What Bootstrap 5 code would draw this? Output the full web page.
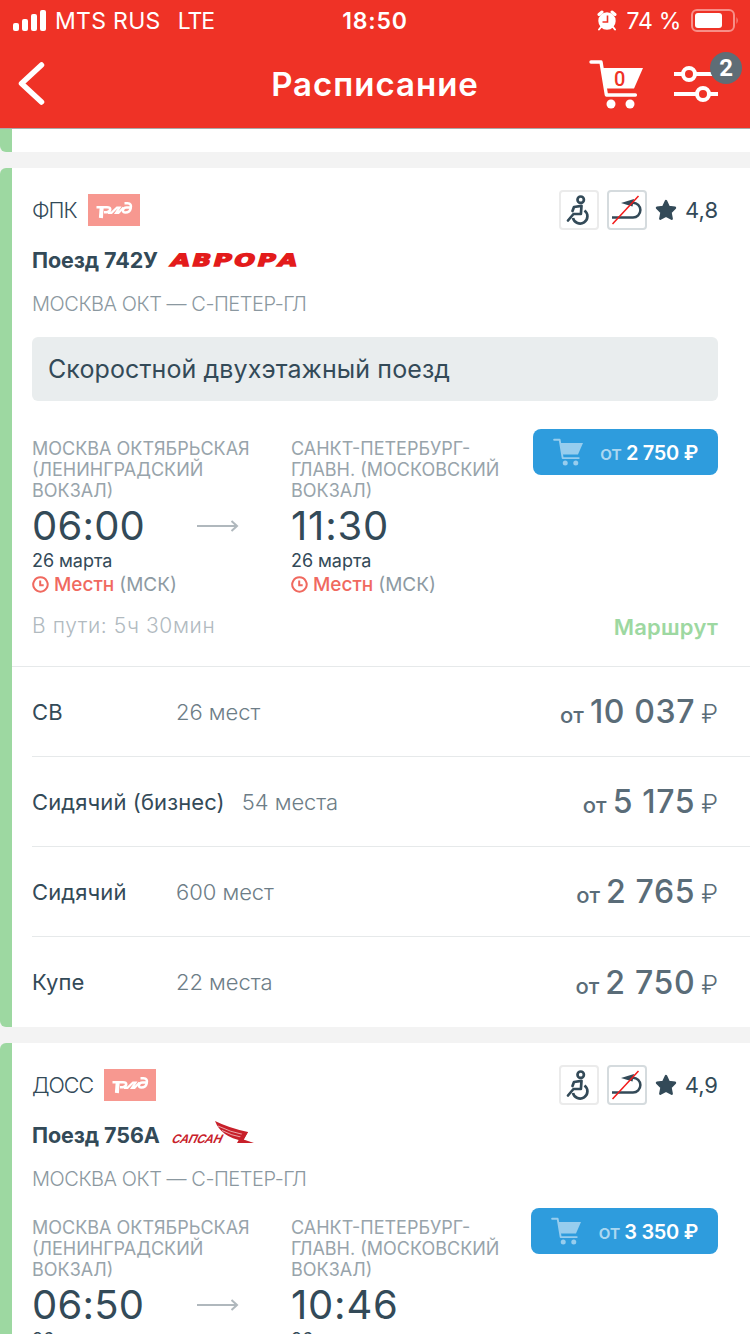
<!DOCTYPE html>
<html lang="ru">

<head>
    <meta charset="UTF-8">
    <meta name="viewport" content="width=device-width, initial-scale=1">
    <title>Расписание</title>

    <!-- Bootstrap CSS -->
    <link href="https://cdn.jsdelivr.net/npm/bootstrap@5.3.0/dist/css/bootstrap.min.css" rel="stylesheet">

    <!-- Custom CSS -->
    <style>
        body {
            width: 750px;
            height: 1334px;
            font-family: Inter, "Noto Sans", sans-serif;
            font-size: 22px;
            line-height: 24px;
            color: #334a58;
            background: #f3f3f3;
            white-space: nowrap;
        }
        svg { display: block; flex: none; }

        /* шапка */
        .top-bar { height: 129px; background: #ef3226; border-bottom: 1px solid #a9aaa9; }
        .status { height: 40px; font-size: 23px; padding: 1px 11px 0 13px; }
        .status .side { flex: 1 1 0; letter-spacing: .3px; }
        .status .clock { font-weight: 600; letter-spacing: .8px; margin: 0 1px 0 -1px; }
        .status .lte { margin-left: 17px; letter-spacing: -1px; }
        .status .charge { margin: 0 9px 0 10px; letter-spacing: -.3px; }
        .title-bar { height: 88px; padding: 0 32px; }
        .title-bar .side { flex: 1 1 0; }
        .title-bar h1 { font-size: 33px; line-height: 40px; font-weight: 600; letter-spacing: 1px; }
        .back { margin-left: -14px; }
        .gap-tools { gap: 31px; }
        .counter { top: -14px; left: 36px; width: 32px; height: 32px; line-height: 32px; background: #5f6d76; font-family: Roboto, sans-serif; font-size: 24px; font-weight: 700; }

        /* карточка поезда */
        .train { margin-bottom: 16px; }
        .stripe { width: 12px; flex: none; background: #9dd8a1; border-radius: 6px 0 0 6px; }
        .stripe-end { border-radius: 0 0 0 6px; height: 23px; }
        .train-info { padding: 22px 32px 0 20px; }
        .carrier { font-size: 21.5px; font-weight: 300; letter-spacing: -1px; margin-right: 3px; }
        .svc { width: 40px; height: 40px; border: 2px solid #ebebeb; border-radius: 4px; }
        .svc-on { border-color: #d5dbde; }
        .rating { gap: 8px; }
        .train-name { height: 30px; margin-top: 15px; font-weight: 700; font-size: 21.5px; letter-spacing: -.1px; }
        .direction { margin-top: 17px; font-size: 20px; font-weight: 300; color: #8b98a0; letter-spacing: -.45px; }
        .note { height: 64px; margin-top: 21px; padding-left: 16px; border-radius: 6px; background: #e9edee; font-size: 25px; letter-spacing: .1px; }
        .trip { margin-top: 28px; }
        .trip-plain { margin-top: 17px; }
        .station { width: 259px; flex: none; padding-top: 9px; }
        .station-to { width: 240px; }
        .place { font-size: 18px; line-height: 21px; color: #98a4ab; letter-spacing: 0; }
        .time { width: 165px; font-size: 40px; line-height: 50px; letter-spacing: .2px; }
        .station-to .time { letter-spacing: .8px; }
        .day { font-size: 18px; line-height: 19px; letter-spacing: -.05px; }
        .zone { font-size: 19px; line-height: 28px; font-weight: 400; gap: 5px; color: #8d9aa2; padding-top: 1px; }
        .zone svg { margin-top: -2px; }
        .zone b { font-weight: 500; color: #f0695f; }
        .buy { height: 46px; padding: 2px 20px 0; border: 0; border-radius: 8px; background: #2e9cdd; color: #fff; font-size: 20px; line-height: 44px; font-weight: 600; letter-spacing: -.3px; gap: 17px; }
        .buy svg { margin-top: -2px; }
        .buy span { color: #abd7f1; font-weight: 500; }
        .buy-wrap { flex: 1 1 0; }
        .duration { margin-top: 15px; height: 52px; font-size: 21px; color: #b1babf; font-weight: 300; letter-spacing: .6px; }
        .route { font-size: 22px; font-weight: 600; color: #9dd8a1; letter-spacing: .2px; padding-top: 1px; }

        /* классы вагонов */
        .seats { border-top: 1px solid #e6e9ea; padding-left: 20px; }
        .seat { height: 90px; padding-right: 32px; border-bottom: 1px solid #e6e9ea; letter-spacing: .1px; }
        .seat:last-child { border-bottom: 0; }
        .kind { min-width: 144px; padding-right: 17px; }
        .free { color: #6d7d87; font-weight: 300; letter-spacing: -.05px; }
        .price { color: #5a6c78; font-weight: 500; font-size: 32px; line-height: 40px; letter-spacing: .65px; padding-top: 4px; gap: 6px; }
        .price small { font-size: 22px; letter-spacing: 0; }
        .price i { font-style: normal; font-size: 25px; font-weight: 300; letter-spacing: 0; }
    </style>
</head>

<body class="overflow-hidden">

<!-- Иконки -->
<svg class="d-none">
    <symbol id="cart" viewBox="0 0 54 50">
        <path d="M2 3h10l5.400 33h29" fill="none" stroke="currentColor" stroke-width="3.400" stroke-linecap="round" stroke-linejoin="round"/>
        <path d="M13 9h41l-9 20.500H17z" fill="currentColor"/>
        <circle cx="22" cy="45" r="4.500" fill="currentColor"/>
        <circle cx="41" cy="45" r="4.500" fill="currentColor"/>
    </symbol>
    <symbol id="rzd" viewBox="0 0 52 32">
        <path fill="#f79890" d="M0 0h52v32H0z"/>
        <g fill="none" stroke="#fff">
            <path d="M8.500 13.200h10.500q3.500 0 3.200 2.300t-3.500 2.700h-2.700" stroke-width="2.600"/>
            <path d="M13.700 13L12.900 24" stroke-width="4"/>
            <path d="M20 18.800h3.500l5.500-5.300h2.500L28 18.800h2.500l5-5.300" stroke-width="2.200"/>
            <path d="M36.500 9.300h3q4.500 0 3.200 5.200-.9 4-5.200 4-3 0-2.500-2.500t3.500-2.500h4" stroke-width="2.500"/>
        </g>
    </symbol>
    <symbol id="chair" viewBox="0 0 36 36">
        <g fill="none" stroke="#334a58" stroke-width="2.700" stroke-linejoin="round">
            <circle cx="19.700" cy="7.700" r="3.200"/>
            <path d="M11.500 19l1.500-4 7.500-1.200-.6 8.200h-7.400L7 28.500" stroke-linecap="round"/>
            <path d="M23.500 18.500a7.300 7.300 0 1 1-11.500 7.500"/>
        </g>
    </symbol>
    <symbol id="noreturn" viewBox="0 0 36 36">
        <path d="M3 25.500h21a7.300 7.300 0 0 0 0-14.800H20" fill="none" stroke="#334a58" stroke-width="2.500"/>
        <path d="M12 11L25 7l-1.500 7.500z" fill="#334a58"/>
        <path d="M3.500 32L29.500 4" stroke="#f21a1a" stroke-width="1.500"/>
    </symbol>
    <symbol id="star" viewBox="0 0 22 22">
        <path d="M11 2l2.800 6 6.200.8-4.500 4.600 1.200 6.400L11 16.800l-5.700 3 1.200-6.400L2 8.800 8.200 8z" fill="#334a58" stroke="#334a58" stroke-width="2.400" stroke-linejoin="round"/>
    </symbol>
    <symbol id="arrow" viewBox="0 0 42 14">
        <path d="M0 7h40M34.500 2l5.500 5-5.500 5" fill="none" stroke="#b0b8bd" stroke-width="2"/>
    </symbol>
    <symbol id="watch" viewBox="0 0 17 17">
        <path d="M8.500 1.300a7.200 7.200 0 1 1-.1 0zM8.200 4.500v4.700h3.500" fill="none" stroke="#f0695f" stroke-width="2"/>
    </symbol>
</svg>

<header class="top-bar text-white">
    <div class="status d-flex align-items-center">
        <div class="side d-flex align-items-center">
            <svg width="34" height="22" viewBox="0 0 34 22" fill="#fff">
                <rect y="13" width="6" height="8" rx="2"/>
                <rect x="9" y="9" width="6" height="12" rx="2"/>
                <rect x="18" y="4" width="6" height="17" rx="2"/>
                <rect x="27" width="6" height="21" rx="2"/>
            </svg>
            <span class="ms-2">MTS RUS</span><span class="lte">LTE</span>
        </div>
        <div class="clock">18:50</div>
        <div class="side d-flex align-items-center justify-content-end">
            <svg width="20" height="21" viewBox="0 0 20 21">
                <circle cx="10" cy="11" r="8.700" fill="#fff"/>
                <path d="M2 4.500L5 2M18 4.500L15 2" stroke="#fff" stroke-width="3" stroke-linecap="round"/>
                <path d="M4 17l-2 2.500M16 17l2 2.500" stroke="#fff" stroke-width="2" stroke-linecap="round"/>
                <path d="M10.500 5.500V12H5.500" fill="none" stroke="#ef3226" stroke-width="1.600"/>
            </svg>
            <span class="charge">74 %</span>
            <svg width="49" height="24" viewBox="0 0 49 24">
                <rect x="2" y="1" width="42" height="21" rx="5" fill="none" stroke="#f78f88" stroke-width="2"/>
                <rect x="5" y="4" width="27" height="15" rx="3" fill="#fff"/>
                <path d="M46.500 8q2.500 3.500 0 7z" fill="#f78f88"/>
            </svg>
        </div>
    </div>
    <div class="title-bar d-flex align-items-center">
        <div class="side">
            <svg class="back" width="27" height="44" viewBox="0 0 27 44">
                <path d="M23.500 3L3.500 21.500l20 18.500" fill="none" stroke="#fff" stroke-width="5.500" stroke-linecap="round" stroke-linejoin="round"/>
            </svg>
        </div>
        <h1 class="m-0">Расписание</h1>
        <div class="side d-flex align-items-center justify-content-end gap-tools">
            <svg width="54" height="50" viewBox="0 0 54 50" class="text-white">
                <use href="#cart"/>
                <text x="30.700" y="27" text-anchor="middle" font-family="Roboto" font-size="20" font-weight="500" fill="#ef3226">0</text>
            </svg>
            <div class="position-relative">
                <svg width="44" height="36" viewBox="0 0 44 36" fill="none" stroke="#fff" stroke-width="4">
                    <path d="M0 8h9M21 8h23M0 28h23M35 28h9"/>
                    <circle cx="15" cy="8" r="6"/>
                    <circle cx="29" cy="28" r="6"/>
                </svg>
                <span class="counter position-absolute rounded-circle text-center">2</span>
            </div>
        </div>
    </div>
</header>

<main>
    <!-- Конец предыдущей карточки -->
    <section class="train d-flex">
        <div class="stripe stripe-end"></div>
        <div class="bg-white flex-grow-1"></div>
    </section>

    <section class="train d-flex">
        <div class="stripe"></div>
        <div class="bg-white flex-grow-1">
            <div class="train-info">
                <div class="d-flex align-items-center gap-2">
                    <span class="carrier">ФПК</span>
                    <svg width="52" height="32"><use href="#rzd"/></svg>
                    <div class="svc ms-auto"><svg width="36" height="36"><use href="#chair"/></svg></div>
                    <div class="svc svc-on"><svg width="36" height="36"><use href="#noreturn"/></svg></div>
                    <div class="rating d-flex align-items-center">
                        <svg width="22" height="22"><use href="#star"/></svg>
                        <span>4,8</span>
                    </div>
                </div>
                <div class="train-name d-flex align-items-center">
                    <span>Поезд 742У</span>
                    <svg class="ms-2" width="138" height="20" viewBox="0 0 138 20">
                        <text x="8" y="16" transform="skewX(-16)" textLength="129" lengthAdjust="spacingAndGlyphs" letter-spacing="2" font-family="DejaVu Sans" font-size="17" font-weight="700" fill="#e31b1b" stroke="#e31b1b" stroke-width="1.400">АВРОРА</text>
                    </svg>
                </div>
                <div class="direction">МОСКВА ОКТ — С-ПЕТЕР-ГЛ</div>
                <div class="note d-flex align-items-center">Скоростной двухэтажный поезд</div>
                <div class="trip d-flex">
                    <div class="station">
                        <div class="place">МОСКВА ОКТЯБРЬСКАЯ<br>(ЛЕНИНГРАДСКИЙ<br>ВОКЗАЛ)</div>
                        <div class="d-flex align-items-center">
                            <span class="time">06:00</span>
                            <svg width="42" height="14"><use href="#arrow"/></svg>
                        </div>
                        <div class="day">26 марта</div>
                        <div class="zone d-flex align-items-center">
                            <svg width="17" height="17"><use href="#watch"/></svg>
                            <b>Местн</b> <span>(МСК)</span>
                        </div>
                    </div>
                    <div class="station station-to">
                        <div class="place">САНКТ-ПЕТЕРБУРГ-<br>ГЛАВН. (МОСКОВСКИЙ<br>ВОКЗАЛ)</div>
                        <div class="time">11:30</div>
                        <div class="day">26 марта</div>
                        <div class="zone d-flex align-items-center">
                            <svg width="17" height="17"><use href="#watch"/></svg>
                            <b>Местн</b> <span>(МСК)</span>
                        </div>
                    </div>
                    <div class="buy-wrap d-flex justify-content-end align-items-start">
                        <button type="button" class="buy btn d-flex align-items-center">
                            <svg width="30" height="28" color="#97cdee"><use href="#cart"/></svg>
                            <div><span>от</span> 2 750 ₽</div>
                        </button>
                    </div>
                </div>
                <div class="duration d-flex justify-content-between">
                    <span>В пути: 5ч 30мин</span>
                    <span class="route">Маршрут</span>
                </div>
            </div>
            <div class="seats">
                <div class="seat d-flex align-items-center">
                    <span class="kind">СВ</span>
                    <span class="free">26 мест</span>
                    <div class="price d-flex align-items-baseline ms-auto"><small>от</small><span>10 037</span><i>₽</i></div>
                </div>
                <div class="seat d-flex align-items-center">
                    <span class="kind">Сидячий (бизнес)</span>
                    <span class="free">54 места</span>
                    <div class="price d-flex align-items-baseline ms-auto"><small>от</small><span>5 175</span><i>₽</i></div>
                </div>
                <div class="seat d-flex align-items-center">
                    <span class="kind">Сидячий</span>
                    <span class="free">600 мест</span>
                    <div class="price d-flex align-items-baseline ms-auto"><small>от</small><span>2 765</span><i>₽</i></div>
                </div>
                <div class="seat d-flex align-items-center">
                    <span class="kind">Купе</span>
                    <span class="free">22 места</span>
                    <div class="price d-flex align-items-baseline ms-auto"><small>от</small><span>2 750</span><i>₽</i></div>
                </div>
            </div>
        </div>
    </section>

    <section class="train d-flex">
        <div class="stripe"></div>
        <div class="bg-white flex-grow-1">
            <div class="train-info">
                <div class="d-flex align-items-center gap-2">
                    <span class="carrier">ДОСС</span>
                    <svg width="52" height="32"><use href="#rzd"/></svg>
                    <div class="svc ms-auto"><svg width="36" height="36"><use href="#chair"/></svg></div>
                    <div class="svc svc-on"><svg width="36" height="36"><use href="#noreturn"/></svg></div>
                    <div class="rating d-flex align-items-center">
                        <svg width="22" height="22"><use href="#star"/></svg>
                        <span>4,9</span>
                    </div>
                </div>
                <div class="train-name d-flex align-items-center">
                    <span>Поезд 756А</span>
                    <svg class="ms-2" width="88" height="30" viewBox="0 0 88 30">
                        <text x="13" y="23" transform="skewX(-24)" textLength="50" lengthAdjust="spacingAndGlyphs" font-family="Liberation Sans" font-size="12.500" font-weight="700" fill="#c8202a">САПСАН</text>
                        <path d="M47 1q14 7 33 11l-5 9q-22-4-28-20z" fill="#c8202a"/>
                        <path d="M50 6q12 6 27 9M54 10.500q9 5 21 7" fill="none" stroke="#fff" stroke-width=".6"/>
                        <path d="M75 12h5l-4.500 7.500 10.500 3.500H69z" fill="#c8202a"/>
                    </svg>
                </div>
                <div class="direction">МОСКВА ОКТ — С-ПЕТЕР-ГЛ</div>
                <div class="trip trip-plain d-flex">
                    <div class="station">
                        <div class="place">МОСКВА ОКТЯБРЬСКАЯ<br>(ЛЕНИНГРАДСКИЙ<br>ВОКЗАЛ)</div>
                        <div class="d-flex align-items-center">
                            <span class="time">06:50</span>
                            <svg width="42" height="14"><use href="#arrow"/></svg>
                        </div>
                        <div class="day">26 марта</div>
                    </div>
                    <div class="station station-to">
                        <div class="place">САНКТ-ПЕТЕРБУРГ-<br>ГЛАВН. (МОСКОВСКИЙ<br>ВОКЗАЛ)</div>
                        <div class="time">10:46</div>
                        <div class="day">26 марта</div>
                    </div>
                    <div class="buy-wrap d-flex justify-content-end align-items-start">
                        <button type="button" class="buy btn d-flex align-items-center">
                            <svg width="30" height="28" color="#97cdee"><use href="#cart"/></svg>
                            <div><span>от</span> 3 350 ₽</div>
                        </button>
                    </div>
                </div>
            </div>
        </div>
    </section>
</main>

<!-- Bootstrap JS -->
<script src="https://cdn.jsdelivr.net/npm/bootstrap@5.3.0/dist/js/bootstrap.bundle.min.js"></script>
</body>

</html>
